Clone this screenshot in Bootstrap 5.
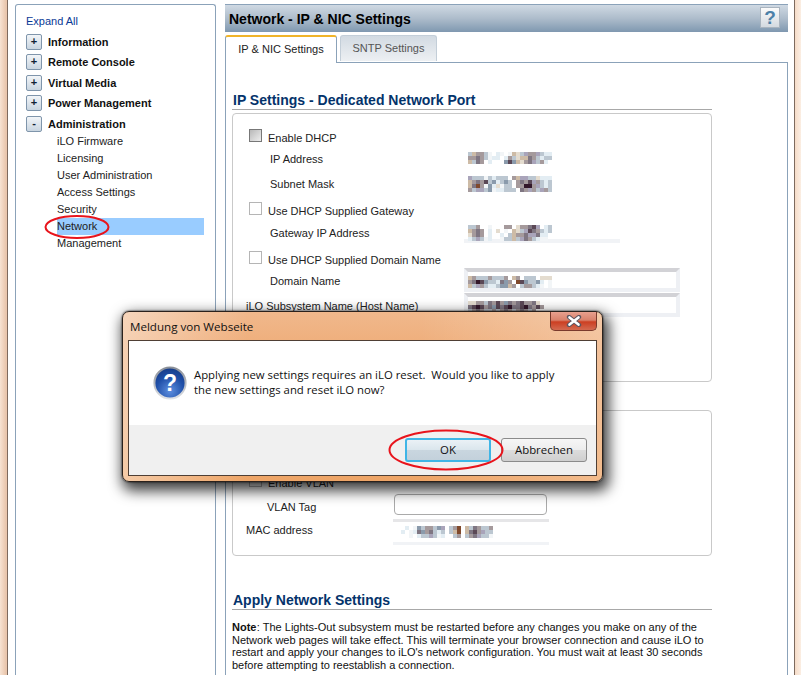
<!DOCTYPE html>
<html lang="en">
<head>
<meta charset="utf-8">
<title>Network - IP &amp; NIC Settings</title>
<link rel="stylesheet" href="https://cdn.jsdelivr.net/npm/bootstrap@5.3.0/dist/css/bootstrap.min.css">
<style>
html,body{height:675px;overflow:hidden;background:#fff}
body{font:11px/14px "Liberation Sans",Arial,sans-serif;color:#111;position:relative}
.shell{height:675px;width:801px}
.edge-l{width:8px;background:linear-gradient(90deg,#f7e3d3,#e9c6ad 85%);border-right:1px solid #7d6a5e}
.edge-r{width:7px;background:linear-gradient(90deg,#f6dcc8,#fbeee3);border-left:1px solid #7d6a5e}
.side{width:201px;margin:4px 0 0 7px;border:1px solid #8ba2b9;border-bottom:0;border-radius:3px 3px 0 0;padding:9px 11px 0 10px;height:671px}
.expand{display:block;color:#0a3a96;text-decoration:none;line-height:14px;margin-bottom:4px}
.tree-row{height:20px;padding-top:2px;font-weight:700;font-size:11px;line-height:16px}
.tree-row.tall{height:21px}
.tog{width:16px;height:16px;border:1px solid #7f95ab;border-radius:2px;background:linear-gradient(#f2f5f8,#c9d5e0);color:#123;line-height:13px;text-align:center;font-weight:700;margin-right:6px;flex:none}
.sub-list{margin:0;padding:0 0 0 31px;margin-top:-1px}
.sub-item{height:17px;line-height:17px;font-size:11px;color:#222;padding-left:0}
.sub-item.on{background:#99ccff}
.main{width:563px;margin:4px 0 0 9px}
.top-bar{height:28px;background:linear-gradient(#cfd9e3,#adbccb 50%,#7f98b0);padding:0 8px 0 4px;border-top:1px solid #8ba2b9}
.top-title{font-size:14px;font-weight:700;color:#000;margin:0;line-height:16px}
.help{width:20px;height:21px;margin-top:-2px;background:linear-gradient(#fbfbfb,#d4dae0);border:1px solid #a9b4bf;color:#4c80a8;font:700 19px/19px "Liberation Sans",sans-serif;text-align:center}
.tabs{height:27px;margin-top:3px;border:0;gap:3px;align-items:flex-start}
.tabs .nav-link{font-size:11px;line-height:14px;border-radius:3px 3px 0 0;padding:0;text-align:center}
.tabs .nav-link.active{width:112px;height:28px;line-height:25px;color:#222;background:#fff;border:1px solid #8ba2b9;border-top:2px solid #f0b429;border-bottom:0;position:relative;z-index:1}
.tabs .nav-link.other{width:97px;height:26px;line-height:24px;color:#555;background:linear-gradient(#d2dae2,#edf0f3);border:1px solid #c3ced8;border-bottom:0}
.panel-body{border:1px solid #8ba2b9;border-bottom:0;padding:29px 0 0 6px;height:620px}
.sec-head{font-size:14px;line-height:16px;font-weight:700;color:#04336b;margin:0;padding:0 0 1px 1px;border-bottom:1px solid #a8a8a8;width:480px}
.sec-apply{margin-top:36px}
.group{width:480px;border:1px solid #c9c9c9;border-radius:4px;padding-left:13px}
.group-a{height:269px;margin-top:3px;padding-top:14px}
.group-b{height:146px;margin-top:28px;padding-top:62px}
.frow{line-height:20px;color:#222}
.h21{height:21px}.h22{height:22px}.h23{height:23px}.h24{height:24px}.h25{height:25px}.h27{height:27px}
.lab-a{width:218px;flex:none}
.lab-b{width:148px;flex:none}
.ind{padding-left:24px}
.ind-b{padding-left:21px}
.cb{width:13px;height:13px;margin:1px 6px 0 3px;border-radius:0!important;border:1px solid #b5b5b5;flex:none}
.cb.dark{border-color:#777;background:linear-gradient(135deg,#b8b8b8,#eee)}
.mos{display:block;margin-left:4px}
.mt2px{margin-top:2px}.mt3px{margin-top:3px}.mt4px{margin-top:4px}
.blur-field{width:216px;height:24px;border:4px solid #eef0f4;border-top-color:#d2d2d6;margin-top:-3px}
.blur-field .mos{margin:4px 0 0 0}
.blur-under{width:156px;border-bottom:4px solid #f1f3f6;height:20px}
.blur-mac{width:156px;height:26px;margin:-1px 0 0 -1px;border-top:3px solid #e6e6e8;border-bottom:3px solid #f1f3f6}
.tag-input{width:153px;height:21px;border:1px solid #aaa;border-radius:2px;margin-top:-3px;padding:0}
.note{width:480px;margin:11px 0 0;font-size:11px;line-height:12.7px;color:#111}
.note b{margin-right:.4px}
.ring{position:absolute;pointer-events:none;z-index:30}
#ringNet{left:44px;top:214px}
#ringOk{left:388px;top:429px}
.dlg{position:absolute;left:122px;top:311px;width:481px;height:171px;z-index:20;border:1px solid #2a211c;border-radius:7px;box-shadow:0 0 2px #000,3px 6px 14px 3px rgba(0,0,0,.75);background:linear-gradient(90deg,rgba(255,255,255,.42),rgba(255,255,255,0) 26%,rgba(255,255,255,0) 62%,rgba(255,255,255,.25)),linear-gradient(#f0b88c,#efae7b 20%,#eea567);padding:0 5px 5px 5px}
.dlg-top{height:28px;color:#111;font:11.6px/30px "Open Sans","Noto Sans",sans-serif;padding-left:2px}
.dlg-x{width:47px;height:19px;margin-right:0;border:1px solid #7a3a2c;border-top:0;border-radius:0 0 5px 5px;background:linear-gradient(#e8a08e,#d9826c 45%,#cc3f22 55%,#d36a50)}
.dlg-box{height:136px;border:1px solid #4f3f35;background:#fff}
.dlg-main{height:84px;padding:25px 0 0 24px}
.dlg-msg{font:11.35px/15px "Open Sans","Noto Sans",sans-serif;color:#111;margin:1px 0 0 7px}
.dlg-foot{height:50px;background:#f0f0f0;padding:13px 9px 0 0;gap:10px}
.wbtn{height:24px;width:86px;padding:0;font:11.4px/20px "Open Sans","Noto Sans",sans-serif;color:#111;border-radius:3px;border:1px solid #8b8b8b;background:linear-gradient(#f6f6f6,#ededed 48%,#dcdcdc 52%,#cfcfcf)}
.wbtn.def{border:2px solid #3fb5e6;background:linear-gradient(#eaf1f6,#dbe6ed 48%,#c9d6df 52%,#c3d1db)}
</style>
</head>
<body>
<div class="shell d-flex">
  <div class="edge-l flex-none"></div>
  <aside class="side flex-none">
    <a class="expand" href="#">Expand All</a>
    <div class="tree-row d-flex align-items-start"><span class="tog">+</span>Information</div>
    <div class="tree-row tall d-flex align-items-start"><span class="tog">+</span>Remote Console</div>
    <div class="tree-row d-flex align-items-start"><span class="tog">+</span>Virtual Media</div>
    <div class="tree-row tall d-flex align-items-start"><span class="tog">+</span>Power Management</div>
    <div class="tree-row d-flex align-items-start"><span class="tog">-</span>Administration</div>
    <ul class="sub-list list-unstyled">
      <li class="sub-item">iLO Firmware</li>
      <li class="sub-item">Licensing</li>
      <li class="sub-item">User Administration</li>
      <li class="sub-item">Access Settings</li>
      <li class="sub-item">Security</li>
      <li class="sub-item on">Network</li>
      <li class="sub-item">Management</li>
    </ul>
  </aside>
  <main class="main flex-none">
    <div class="top-bar d-flex align-items-center justify-content-between">
      <h1 class="top-title">Network - IP &amp; NIC Settings</h1>
      <div class="help">?</div>
    </div>
    <ul class="nav nav-tabs tabs">
      <li class="nav-item"><a class="nav-link active" href="#">IP &amp; NIC Settings</a></li>
      <li class="nav-item"><a class="nav-link other" href="#">SNTP Settings</a></li>
    </ul>
    <div class="panel-body">
      <h2 class="sec-head">IP Settings - Dedicated Network Port</h2>
      <div class="group group-a">
        <div class="frow h21 d-flex"><input class="form-check-input cb dark" type="checkbox" aria-label="Enable DHCP">Enable DHCP</div>
        <div class="frow h25 d-flex"><div class="lab-a ind">IP Address</div><svg class="mos mt3px" data-m="dabbdk.fk.kaedjbbjdff|bbcbdkff.fbdeaacbdfdd|adcb.f...lglaebcjdbf." width="84" height="12"></svg></div>
        <div class="frow h27 d-flex"><div class="lab-a ind">Subnet Mask</div><svg class="mos mt2px" data-m="jdddkdfddd.bajjddefff|abcbgdlfdld.bcbgjbdfd|achbklfekdd.bbiibjdfd|bdjjdlkffddd.cbjbdjbd" width="84" height="16"></svg></div>
        <div class="frow h22 d-flex"><input class="form-check-input cb" type="checkbox" aria-label="Use DHCP Supplied Gateway">Use DHCP Supplied Gateway</div>
        <div class="frow h27 d-flex"><div class="lab-a ind">Gateway IP Address</div><div class="blur-under"><svg class="mos mt2px" data-m="ddb..k...bb.ebbcgj.fd|abcb.f.e.k.aedjgcbdfd|ebcb.f..f.dabbcjjcff.|fdjdkf..kddadjcbdfkk." width="84" height="16"></svg></div></div>
        <div class="frow h21 d-flex"><input class="form-check-input cb" type="checkbox" aria-label="Use DHCP Supplied Domain Name">Use DHCP Supplied Domain Name</div>
        <div class="frow h25 d-flex"><div class="lab-a ind">Domain Name</div><div class="blur-field"><svg class="mos" data-m="abdddbdddb.ab.ddd.eee|bciglddfclb.hglddlf.k.|adjbdffdllab.dbbdfk.k" width="84" height="12"></svg></div></div>
        <div class="frow h25 d-flex"><div class="lab-a">iLO Subsystem Name (Host Name)</div><div class="blur-field"><svg class="mos" data-m="eebbdcbgblcbcgbbce...|cgigbclgcgiccgicbgb..|dbcbddbdbcbdbcbdb...." width="84" height="12"></svg></div></div>
      </div>
      <div class="group group-b">
        <div class="frow h24 d-flex"><input class="form-check-input cb" type="checkbox" aria-label="Enable VLAN">Enable VLAN</div>
        <div class="frow h23 d-flex"><div class="lab-b ind-b">VLAN Tag</div><input class="tag-input form-control rounded-1" type="text" aria-label="VLAN Tag"></div>
        <div class="frow h25 d-flex"><div class="lab-b">MAC address</div><div class="blur-mac"><svg class="mos mt4px" data-m="..f.kldbbdlj.dbh.adcbddb|.f.kfclbcdfd.dah.acgbjdd|...k.fddjdkf..db.dbcjddk" width="96" height="12"></svg></div></div>
      </div>
      <h2 class="sec-head sec-apply">Apply Network Settings</h2>
      <p class="note"><b>Note</b>: The Lights-Out subsystem must be restarted before any changes you make on any of the Network web pages will take effect. This will terminate your browser connection and cause iLO to restart and apply your changes to iLO's network configuration. You must wait at least 30 seconds before attempting to reestablish a connection.</p>
    </div>
  </main>
  <div class="flex-grow-1"></div>
  <div class="edge-r flex-none"></div>
</div>

<svg class="ring" width="66" height="26" viewBox="0 0 66 26" id="ringNet"><ellipse cx="33" cy="13" rx="31.5" ry="11" fill="none" stroke="#e8141c" stroke-width="2"/></svg>

<div class="dlg" role="dialog">
  <div class="dlg-top d-flex justify-content-between align-items-start">
    <span>Meldung von Webseite</span>
    <div class="dlg-x d-flex align-items-center justify-content-center">
      <svg width="16" height="12" viewBox="0 0 16 12"><path d="M3 2 L13 10 M13 2 L3 10" stroke="#5b5560" stroke-width="4.4" stroke-linecap="round"/><path d="M3.5 2.4 L12.5 9.6 M12.5 2.4 L3.5 9.6" stroke="#fff" stroke-width="2.6" stroke-linecap="round"/></svg>
    </div>
  </div>
  <div class="dlg-box">
    <div class="dlg-main d-flex align-items-start">
      <svg width="34" height="34" viewBox="0 0 34 34" class="flex-none">
        <defs>
          <radialGradient id="qb" cx=".5" cy=".75" r=".75"><stop offset="0" stop-color="#5d8fe0"/><stop offset=".6" stop-color="#1f4fa8"/><stop offset="1" stop-color="#163b86"/></radialGradient>
          <linearGradient id="qr" x1="0" y1="0" x2="0" y2="1"><stop offset="0" stop-color="#8a8f98"/><stop offset="1" stop-color="#dfe2e6"/></linearGradient>
        </defs>
        <circle cx="17" cy="17" r="15.6" fill="url(#qb)" stroke="url(#qr)" stroke-width="2"/>
        <text x="17" y="25" text-anchor="middle" font-family="Liberation Sans, sans-serif" font-weight="700" font-size="23" fill="#fff">?</text>
      </svg>
      <p class="dlg-msg mb-0">Applying new settings requires an iLO reset.&nbsp; Would you like to apply<br>the new settings and reset iLO now?</p>
    </div>
    <div class="dlg-foot d-flex justify-content-end align-items-start">
      <button type="button" class="btn wbtn def">OK</button>
      <button type="button" class="btn wbtn">Abbrechen</button>
    </div>
  </div>
</div>

<svg class="ring" width="116" height="42" viewBox="0 0 116 42" id="ringOk"><ellipse cx="58" cy="21" rx="56.5" ry="19.5" fill="none" stroke="#e8141c" stroke-width="2"/></svg>

<script src="https://cdn.jsdelivr.net/npm/bootstrap@5.3.0/dist/js/bootstrap.bundle.min.js"></script>
<script>
var pal={a:'#cdbba6',b:'#a59a9c',c:'#7f7682',d:'#bcc7d1',e:'#e4dccf',f:'#e3edf3',g:'#5b4856',h:'#80492c',i:'#33172a',j:'#a9a4ba',k:'#f2f5f7',l:'#8a9aab'};
document.querySelectorAll('svg[data-m]').forEach(function(s){
  s.getAttribute('data-m').split('|').forEach(function(r,y){
    r.split('').forEach(function(c,x){
      if(!pal[c])return;
      var q=document.createElementNS('http://www.w3.org/2000/svg','rect');
      q.setAttribute('x',x*4);q.setAttribute('y',y*4);q.setAttribute('width',4);q.setAttribute('height',4);q.setAttribute('fill',pal[c]);
      s.appendChild(q);
    });
  });
});
</script>
</body>
</html>
